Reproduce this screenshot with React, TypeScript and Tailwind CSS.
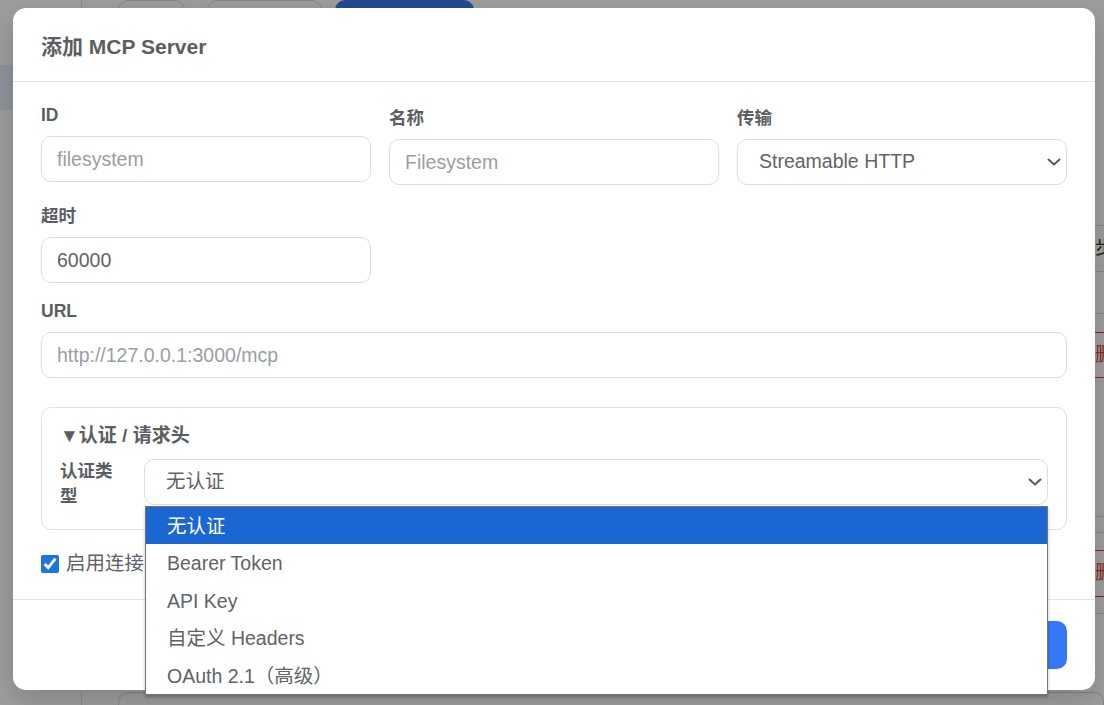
import React from 'react';

const authOptions = ['无认证', 'Bearer Token', 'API Key', '自定义 Headers', 'OAuth 2.1（高级）'];

function Chevron() {
  return (
    <svg
      width="14"
      height="8"
      viewBox="0 0 14 8"
      className="pointer-events-none absolute right-[6px] top-1/2 -translate-y-1/2 text-[#555a60]"
    >
      <path d="M1.5 1.5 7 6.5l5.5-5" fill="none" stroke="currentColor" strokeWidth="2" strokeLinecap="round" strokeLinejoin="round" />
    </svg>
  );
}

interface FieldProps {
  label: string;
  latin?: boolean;
  className?: string;
  children: React.ReactNode;
}

function Field({ label, latin, className, children }: FieldProps) {
  return (
    <div className={className}>
      <label
        className={`mb-[11px] block text-[17.5px] font-bold leading-[20px] text-[#5a5e63] ${latin ? '' : 'pt-[3px]'}`}
      >
        {label}
      </label>
      {children}
    </div>
  );
}

const inputCls =
  'h-[46px] w-full rounded-[10px] border border-[#dcdcdc] bg-white px-[15px] text-[19.5px] text-[#5f6368] outline-none placeholder:text-[#9a9ea4]';

const selectCls =
  'h-[46px] w-full appearance-none rounded-[10px] border border-[#dcdcdc] bg-white pl-[21px] text-[19.5px] text-[#5f6368] outline-none';

// Page behind the dialog: sidebar, toolbar and the server table
function BackgroundPage() {
  return (
    <div className="flex h-full">
      <aside className="w-[82px] shrink-0 border-r border-[#e3e3e3] pt-[65px]">
        <div className="h-[45px] bg-[#e7effc]" />
      </aside>
      <main className="min-w-0 flex-1">
        <div className="flex pl-[36px]">
          <button className="h-[40px] w-[67px] rounded-[10px] border border-[#d6d6d6]">刷新</button>
          <button className="ml-[22px] h-[40px] w-[115px] rounded-[10px] border border-[#d6d6d6]">导入配置</button>
          <button className="ml-[13px] h-[40px] w-[139px] rounded-[10px] bg-[#3879ef] text-white">添加 Server</button>
        </div>

        <div className="mt-[185px] text-[19px] text-[#333]">
          <div className="flex h-[46px] items-center border-t border-[#dedede]">
            <span className="ml-auto w-[28px] shrink-0 whitespace-nowrap">同步</span>
          </div>
          <div className="h-[42px] border-t border-[#dedede]" />
          <div className="flex h-[203px] items-start border-t border-[#dedede] pt-[18px]">
            <span className="ml-auto flex h-[46px] w-[24px] shrink-0 items-center whitespace-nowrap border-y border-l border-[#e5443a] pl-[14px] text-[#e5443a]">
              删除
            </span>
          </div>
          <div className="h-[16px] border-t border-[#dedede]" />
          <div className="flex h-[81px] items-start border-t border-[#dedede] pt-[17px]">
            <span className="ml-auto flex h-[47px] w-[24px] shrink-0 items-center whitespace-nowrap border-y border-l border-[#e5443a] pl-[14px] text-[#e5443a]">
              删除
            </span>
          </div>
          <div className="border-t border-[#dedede]" />
        </div>

        <div className="ml-[36px] mt-[78px] h-[40px] rounded-[10px] border border-[#d6d6d6]" />
      </main>
    </div>
  );
}

export default function App() {
  return (
    <div className="relative h-[705px] w-[1104px] overflow-hidden bg-white font-['Liberation_Sans','Noto_Sans_CJK_SC',sans-serif]">
      <BackgroundPage />

      <div className="absolute inset-0 bg-black/[0.38]" />

      <div className="absolute left-[13px] top-[8px] w-[1082px] rounded-[13px] bg-white shadow-[0_10px_30px_rgba(0,0,0,0.18)]">
        <div className="border-b border-[#e2e2e2] px-[28px] pb-[20px] pt-[25px]">
          <h1 className="text-[21px] font-bold leading-[28px] text-[#5a5e63]">添加 MCP Server</h1>
        </div>

        <div className="px-[28px] pb-[23px] pt-[23px]">
          <div className="grid grid-cols-3 items-start gap-[18px]">
            <Field label="ID" latin>
              <input className={inputCls} placeholder="filesystem" />
            </Field>
            <Field label="名称">
              <input className={inputCls} placeholder="Filesystem" />
            </Field>
            <Field label="传输">
              <div className="relative">
                <select className={selectCls} defaultValue="http">
                  <option value="stdio">stdio</option>
                  <option value="http">Streamable HTTP</option>
                  <option value="sse">SSE</option>
                </select>
                <Chevron />
              </div>
            </Field>
            <Field label="超时">
              <input className={inputCls} defaultValue="60000" />
            </Field>
            <div className="col-span-2" />
            <Field label="URL" latin className="col-span-3">
              <input className={inputCls} placeholder="http://127.0.0.1:3000/mcp" />
            </Field>
          </div>

          <details open className="mt-[29px] rounded-[10px] border border-[#e0e0e0] px-[18px] pb-[20px] pt-[16px]">
            <summary className="list-none text-[19px] font-bold leading-[24px] text-[#5a5e63] [&::-webkit-details-marker]:hidden">
              ▼认证 / 请求头
            </summary>
            <div className="mt-[11px] flex items-start gap-[18px]">
              <span className="w-[66px] shrink-0 text-[17.5px] font-bold leading-[25px] text-[#5a5e63]">认证类型</span>
              <div className="relative flex-1">
                <select className={selectCls} defaultValue="none">
                  {authOptions.map((opt, i) => (
                    <option key={opt} value={i === 0 ? 'none' : opt}>
                      {opt}
                    </option>
                  ))}
                </select>
                <Chevron />

                {/* open option list */}
                <ul className="absolute left-px right-0 top-[calc(100%+1px)] z-10 border border-[#767676] bg-white text-[19.5px] text-[#5f6368] shadow-[0_2px_3px_rgba(0,0,0,0.25)]">
                  {authOptions.map((opt, i) => (
                    <li
                      key={opt}
                      className={`flex h-[37.4px] items-center pl-[21px] pt-[2px] ${i === 0 ? 'bg-[#1a67d2] text-white' : ''}`}
                    >
                      {opt}
                    </li>
                  ))}
                </ul>
              </div>
            </div>
          </details>

          <label className="mt-[22px] flex h-[24px] items-center gap-[7px] text-[19.5px] text-[#5f6368]">
            <input type="checkbox" defaultChecked className="h-[18px] w-[18px] accent-[#1b74e4]" />
            启用连接
          </label>
        </div>

        <div className="flex justify-end gap-[12px] border-t border-[#e2e2e2] px-[28px] py-[21px]">
          <button className="h-[48px] rounded-[10px] border border-[#dcdcdc] px-[22px] text-[19.5px] text-[#5f6368]">取消</button>
          <button className="h-[48px] rounded-[10px] bg-[#3478f6] px-[22px] text-[19.5px] text-white">保存</button>
        </div>
      </div>
    </div>
  );
}
